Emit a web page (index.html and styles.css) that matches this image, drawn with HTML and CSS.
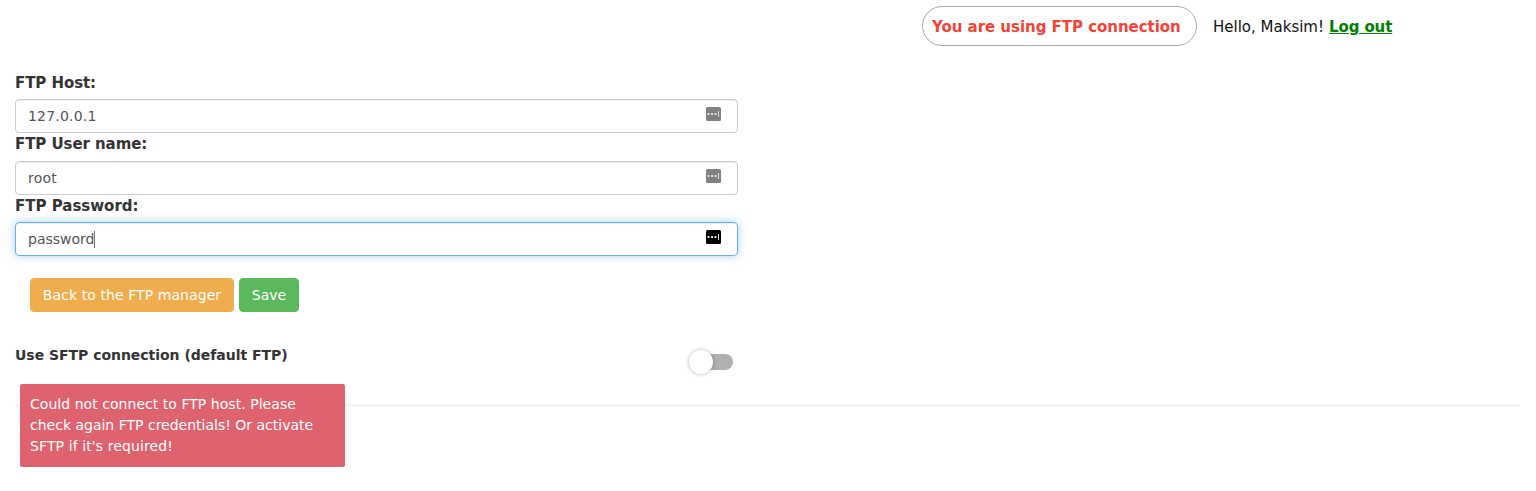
FILE: index.html
```html
<!DOCTYPE html>
<html lang="en">
<head>
<meta charset="utf-8">
<title>FTP settings</title>
<link rel="stylesheet" href="styles.css">
</head>
<body>
<header class="topbar">
  <div class="mode"><span class="mode-text">You are using FTP connection</span></div>
  <div class="user"><span class="hello">Hello, Maksim!</span><a class="logout" href="#">Log out</a></div>
</header>
<main class="content">
  <form class="form">
    <label class="label">FTP Host:</label>
    <div class="field"><span class="value ip">127.0.0.1</span>
      <svg class="key" viewBox="0 0 15 14"><rect width="15" height="14" rx="1.5"/><path d="M1.500 6h2v2h-2zM5 6h2v2H5zM8.500 6h2v2h-2zM12 4h1v6h-1z"/></svg></div>
    <label class="label">FTP User name:</label>
    <div class="field"><span class="value root">root</span>
      <svg class="key" viewBox="0 0 15 14"><rect width="15" height="14" rx="1.5"/><path d="M1.500 6h2v2h-2zM5 6h2v2H5zM8.500 6h2v2h-2zM12 4h1v6h-1z"/></svg></div>
    <label class="label pass">FTP Password:</label>
    <div class="field focused"><span class="value">password</span><i class="caret"></i>
      <svg class="key" viewBox="0 0 15 14"><rect width="15" height="14" rx="1.5"/><path d="M1.500 6h2v2h-2zM5 6h2v2H5zM8.500 6h2v2h-2zM12 4h1v6h-1z"/></svg></div>
    <div class="actions">
      <button class="btn back" type="button"><span>Back to the FTP manager</span></button>
      <button class="btn save" type="button"><span>Save</span></button>
    </div>
    <div class="sftp">
      <span class="sftp-label">Use SFTP connection (default FTP)</span>
      <span class="switch"><i class="track"></i><i class="knob"></i></span>
    </div>
  </form>
  <hr class="rule">
</main>
<div class="toast">
  <span class="t1">Could not connect to FTP host. Please</span><br>
  <span class="t2">check again FTP credentials! Or activate</span><br>
  <span class="t3">SFTP if it's required!</span>
</div>
</body>
</html>
```
FILE: styles.css
```css
* { box-sizing: border-box; }
body { margin: 0; height: 491px; overflow: hidden; background: #fff; color: #333; font: 14px/20px Verdana, "DejaVu Sans", sans-serif; }
.topbar { display: flex; height: 72px; padding: 6px 0 0 922px; font-size: 15px; color: #111; white-space: nowrap; }
.mode { width: 275px; height: 40px; padding: 10px 9px; border: 1px solid #aaa; border-radius: 20px; color: #f44336; font-weight: bold; letter-spacing: -.03px; }
.user { padding: 11px 0 0 16px; }
.logout { margin-left: 5px; color: #008000; font-weight: bold; letter-spacing: -.1px; text-decoration: underline; }
.content { padding: 0 16px 0 15px; }
.form { width: 723px; }
.label { display: block; height: 27.4px; line-height: 23px; font-size: 15px; font-weight: bold; letter-spacing: -.07px; }
.pass { letter-spacing: 0; }
.field { display: flex; align-items: center; height: 34px; padding: 0 16px 0 12px; border: 1px solid #ccc; border-radius: 4px; color: #555; box-shadow: inset 0 1px 1px rgba(0,0,0,.075); }
.ip { letter-spacing: .2px; }
.root { letter-spacing: .2px; }
.focused { border-color: #66afe9; box-shadow: inset 0 1px 1px rgba(0,0,0,.075), 0 0 8px rgba(102,175,233,.6); }
.caret { width: 1px; height: 17px; background: #777; }
.key { width: 15px; height: 14px; margin: 0 0 4px auto; fill: #808080; }
.key path { fill: #ddd; }
.focused .key { fill: #000; }
.actions { display: flex; gap: 5px; padding: 22px 15px 0; }
.btn { height: 34px; padding: 0; border: 1px solid; border-radius: 4px; color: #fff; font: inherit; white-space: nowrap; }
.back { width: 204px; background: #f0ad4e; border-color: #f0ad4e; letter-spacing: .08px; }
.save { width: 60px; background: #5cb85c; border-color: #5cb85c; }
.sftp { display: flex; justify-content: space-between; padding: 33px 5px 0 0; height: 93px; font-weight: bold; }
.sftp-label { letter-spacing: -.03px; }
.switch { display: flex; align-items: center; height: 26px; margin-top: 4px; }
.track { order: 2; width: 32px; height: 16px; margin-left: -12px; border-radius: 8px; background: #b0b0b0; }
.knob { order: 1; z-index: 1; width: 24px; height: 24px; border-radius: 50%; background: #fff; box-shadow: 0 0 4px rgba(0,0,0,.3); }
.rule { margin: 0; border: 0; border-top: 1px solid #eee; }
.toast { position: fixed; left: 20px; top: 384px; width: 325px; height: 83px; padding: 10px; border-radius: 2px; background: #df636f; color: #fff; line-height: 21px; white-space: nowrap; }
.t1 { letter-spacing: .04px; }
.t3 { letter-spacing: .1px; }
```
